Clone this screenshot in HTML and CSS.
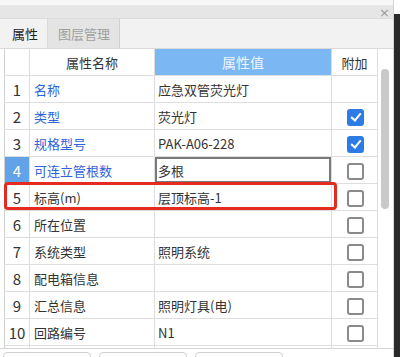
FILE: index.html
```html
<!DOCTYPE html>
<html lang="zh-CN">
<head>
    <meta charset="UTF-8">
    <title>属性</title>
    <link rel="stylesheet" href="styles.css">
</head>
<body>
    <div class="window">
        <div class="titlebar"><span class="close">×</span></div>
        <div class="tabs">
            <div class="tab active">属性</div>
            <div class="tab">图层管理</div>
        </div>

        <div class="grid-wrap">
            <div class="grid">
                <table class="props">
                    <colgroup>
                        <col class="c-idx"><col class="c-name"><col class="c-val"><col class="c-add">
                    </colgroup>
                    <tr class="head">
                        <th></th>
                        <th>属性名称</th>
                        <th class="val-head">属性值</th>
                        <th>附加</th>
                    </tr>
                    <tr><td class="idx">1</td><td class="name blue">名称</td><td>应急双管荧光灯</td><td class="add"></td></tr>
                    <tr><td class="idx">2</td><td class="name blue">类型</td><td>荧光灯</td><td class="add"><span class="check on"></span></td></tr>
                    <tr><td class="idx">3</td><td class="name blue">规格型号</td><td>PAK-A06-228</td><td class="add"><span class="check on"></span></td></tr>
                    <tr><td class="idx sel">4</td><td class="name blue">可连立管根数</td><td class="editing">多根</td><td class="add"><span class="check"></span></td></tr>
                    <tr><td class="idx">5</td><td class="name">标高(m)</td><td>层顶标高-1</td><td class="add"><span class="check"></span></td></tr>
                    <tr><td class="idx">6</td><td class="name">所在位置</td><td></td><td class="add"><span class="check"></span></td></tr>
                    <tr><td class="idx">7</td><td class="name">系统类型</td><td>照明系统</td><td class="add"><span class="check"></span></td></tr>
                    <tr><td class="idx">8</td><td class="name">配电箱信息</td><td></td><td class="add"><span class="check"></span></td></tr>
                    <tr><td class="idx">9</td><td class="name">汇总信息</td><td>照明灯具(电)</td><td class="add"><span class="check"></span></td></tr>
                    <tr><td class="idx">10</td><td class="name">回路编号</td><td>N1</td><td class="add"><span class="check"></span></td></tr>
                    <tr><td class="idx"></td><td class="name"></td><td></td><td class="add"></td></tr>
                </table>
                <!-- highlight round row 5 -->
                <div class="mark"></div>
            </div>
            <div class="scrollbar"><div class="thumb"></div></div>
        </div>

        <div class="buttons">
            <div class="btn"></div>
            <div class="btn"></div>
            <div class="btn"></div>
        </div>
    </div>
    <div class="edge"></div>
</body>
</html>
```

FILE: styles.css
```css
body {
    margin: 0;
    padding: 0;
    display: flex;
    background-color: #ffffff;
    font-family: 'Noto Sans CJK SC', 'Noto Sans', sans-serif;
    font-size: 13px;
    color: #333;
    overflow: hidden;
}

.window {
    width: 393px;
    height: 357px;
    background-color: #f7f7f7;
    border-right: 1px solid #d6d6d6;
    overflow: hidden;
}

.edge {
    width: 6px;
    height: 343px;
    margin-top: 14px;
    background-color: #2a2a2a;
}

.titlebar {
    height: 13px;
    margin-top: 5px;
    background-color: #e6e6e6;
    border-bottom: 1px solid #dcdcdc;
    display: flex;
    justify-content: flex-end;
    align-items: center;
}

.close {
    color: #9a9a9a;
    font-family: 'DejaVu Sans', sans-serif;
    font-size: 13px;
    line-height: 13px;
    margin-right: 3px;
    margin-top: 2px;
}

.tabs {
    height: 29px;
    display: flex;
    background-color: #f2f2f2;
    border-bottom: 1px solid #d9d9d9;
}

.tab {
    padding: 0 9px 0 10px;
    line-height: 29px;
    font-size: 13px;
    color: #a0a0a0;
    background-color: #e4e4e4;
    border-right: 1px solid #d0d0d0;
}

.tab.active {
    color: #222;
    background-color: #f2f2f2;
    padding: 0 9px 0 12px;
    border-right: 1px solid #dadada;
}

.grid-wrap {
    height: 299px;
    display: flex;
    padding-left: 4px;
    border-bottom: 1px solid #d6d6d6;
    background-color: #fff;
    overflow: hidden;
}

.grid {
    position: relative;
    width: 373px;
}

.props {
    border-collapse: collapse;
    table-layout: fixed;
    width: 374px;
    background-color: #fff;
}

.c-idx { width: 25px; }
.c-name { width: 125px; }
.c-val { width: 177px; }
.c-add { width: 46px; }

.props th,
.props td {
    height: 26px;
    padding: 0;
    border: 1px solid #dedede;
    white-space: nowrap;
    overflow: hidden;
}

.props tr:first-child th {
    border-top: none;
}

.props th:first-child,
.props td:first-child {
    border-left: 1px solid #d0d0d0;
}

.props th {
    font-weight: normal;
    text-align: center;
    font-size: 13px;
    color: #333;
}

.props th.val-head {
    background-color: #7ab7f3;
    color: #eef5ff;
    font-size: 14px;
}

.props td {
    padding-left: 3px;
    font-size: 13px;
}

.props td.idx {
    padding: 0;
    text-align: center;
    font-size: 15px;
    color: #333;
}

.props td.idx.sel {
    background-color: #62a2e8;
    color: #fff;
}

.props td.name {
    padding-left: 4px;
}

.blue {
    color: #2f63dc;
}

.props td.editing {
    box-shadow: inset 0 0 0 2px #7a7a7a;
}

.props td.add {
    padding: 0;
    text-align: center;
}

.check {
    display: inline-block;
    width: 13px;
    height: 13px;
    border: 2px solid #8a8a8a;
    border-radius: 3px;
    background-color: #fff;
    vertical-align: middle;
    margin-left: 1px;
    position: relative;
}

.check.on {
    border-color: #2d7be4;
    background-color: #2d7be4;
}

.check.on::after {
    content: "";
    position: absolute;
    left: 4px;
    top: 0px;
    width: 4px;
    height: 8px;
    border-right: 2px solid #fff;
    border-bottom: 2px solid #fff;
    transform: rotate(40deg);
}

.mark {
    position: absolute;
    left: 0;
    top: 133px;
    width: 327px;
    height: 22px;
    border: 3px solid #e52a20;
    border-radius: 4px;
}

.scrollbar {
    width: 16px;
    display: flex;
    justify-content: center;
    padding-top: 20px;
    background-color: #fff;
}

.thumb {
    width: 8px;
    height: 140px;
    border-radius: 4px;
    background-color: #c9c9c9;
}

.buttons {
    display: flex;
    gap: 8px;
    padding: 3px 0 0 3px;
    background-color: #fff;
    height: 20px;
}

.btn {
    width: 86px;
    height: 20px;
    border: 1px solid #cfcfcf;
    border-radius: 4px;
    background-color: #fff;
}
```
